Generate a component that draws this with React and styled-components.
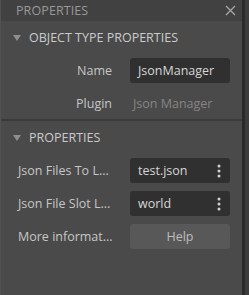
import React from "react";
import styled, { createGlobalStyle } from "styled-components";

const Global = createGlobalStyle`
  html, body { margin: 0; padding: 0; background: #4a4a4a; }
  body { font-family: "Open Sans", "Noto Sans", sans-serif; }
`;

const Window = styled.div`
  width: 249px;
  height: 295px;
  display: flex;
  background: #4a4a4a;
  overflow: hidden;
`;

const Panel = styled.div`
  width: 242px;
  display: flex;
  flex-direction: column;
  border-left: 1px solid #525252;
  box-sizing: border-box;
`;

const Gutter = styled.div`
  width: 3px;
  background: #2b2b2b;
`;

const Edge = styled.div`
  width: 4px;
  background: #3d3d3d;
`;

const TitleBar = styled.div`
  height: 21px;
  background: #414141;
  display: flex;
  align-items: center;
  justify-content: space-between;
  padding: 0 6px 0 15px;
  color: #999;
  font-size: 12.5px;
  letter-spacing: 0.1px;
`;

const Close = styled.svg`
  width: 11px;
  height: 11px;
`;

const SectionHeader = styled.div`
  height: 33px;
  display: flex;
  align-items: center;
  padding-left: 12px;
  gap: 8px;
  color: #cbcbcb;
  font-size: 12.5px;
`;

const Tri = styled.span`
  width: 0;
  height: 0;
  border-left: 4px solid transparent;
  border-right: 4px solid transparent;
  border-top: 6px solid #8e8e8e;
  margin-top: 1px;
`;

const Rows = styled.div`
  display: flex;
  flex-direction: column;
  gap: 8px;
  padding-top: 4px;
  padding-bottom: ${(p) => p.$bottom}px;
`;

const Row = styled.div`
  display: grid;
  grid-template-columns: 111px 100px;
  column-gap: 18px;
  align-items: center;
  height: 25px;
`;

const Label = styled.div`
  font-size: 12.5px;
  color: #c6c6c6;
  text-align: ${(p) => (p.$right ? "right" : "left")};
  padding-left: ${(p) => (p.$right ? 0 : 17)}px;
  white-space: nowrap;
`;

const Field = styled.div`
  height: 25px;
  border-radius: 3px;
  background: #303030;
  display: flex;
  align-items: center;
  justify-content: space-between;
  padding: 0 9px 0 8px;
  box-sizing: border-box;
  font-size: 12.5px;
  color: #d6d6d6;
`;

const Plain = styled.div`
  font-size: 12.5px;
  color: #858585;
  padding-left: 3px;
`;

const Button = styled.div`
  height: 25px;
  border-radius: 3px;
  background: #585858;
  display: flex;
  align-items: center;
  justify-content: center;
  font-size: 12.5px;
  color: #bdbdbd;
`;

const Divider = styled.div`
  height: 2px;
  background: #3b3b3b;
`;

const Dots = () => (
  <svg width="4" height="14" viewBox="0 0 4 14">
    <circle cx="2" cy="2" r="1.5" fill="#d0d0d0" />
    <circle cx="2" cy="7" r="1.5" fill="#d0d0d0" />
    <circle cx="2" cy="12" r="1.5" fill="#d0d0d0" />
  </svg>
);

export default function App() {
  return (
    <>
      <Global />
      <Window>
        <Panel>
          <TitleBar>
            <span>PROPERTIES</span>
            <Close viewBox="0 0 11 11">
              <path d="M1 1 L10 10 M10 1 L1 10" stroke="#a5a5a5" strokeWidth="1.4" />
            </Close>
          </TitleBar>
          <SectionHeader>
            <Tri />
            <span>OBJECT TYPE PROPERTIES</span>
          </SectionHeader>
          <Rows $bottom={3}>
            <Row>
              <Label $right>Name</Label>
              <Field>JsonManager</Field>
            </Row>
            <Row>
              <Label $right>Plugin</Label>
              <Plain>Json Manager</Plain>
            </Row>
          </Rows>
          <Divider />
          <SectionHeader>
            <Tri />
            <span>PROPERTIES</span>
          </SectionHeader>
          <Rows $bottom={0}>
            <Row>
              <Label>Json Files To L...</Label>
              <Field>
                test.json
                <Dots />
              </Field>
            </Row>
            <Row>
              <Label>Json File Slot L...</Label>
              <Field>
                world
                <Dots />
              </Field>
            </Row>
            <Row>
              <Label>More informat...</Label>
              <Button>Help</Button>
            </Row>
          </Rows>
        </Panel>
        <Gutter />
        <Edge />
      </Window>
    </>
  );
}
